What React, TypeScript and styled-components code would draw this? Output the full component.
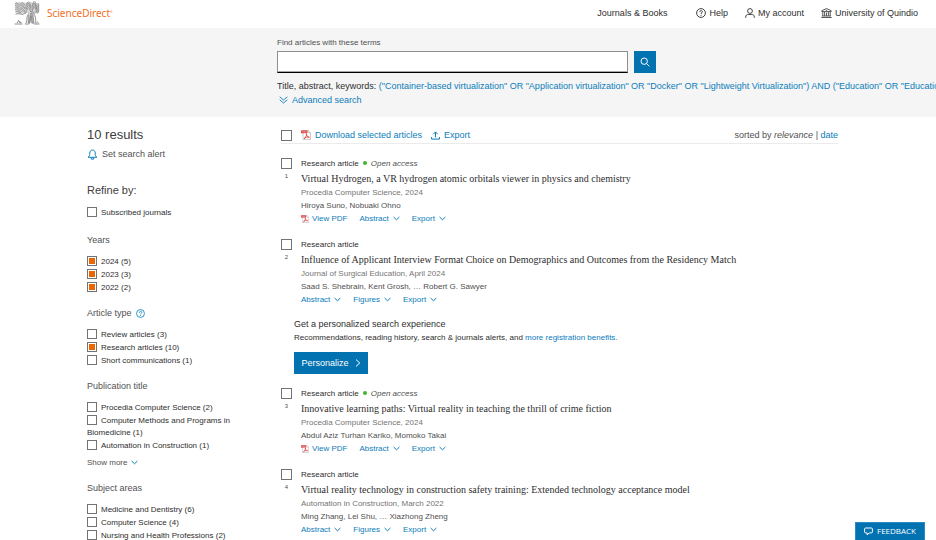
import React from "react";
import styled, { createGlobalStyle, css } from "styled-components";

const blue = "#0c7dbb";
const solidBlue = "#0272b1";
const ink = "#2e2e2e";
const grey = "#505050";

const GlobalStyle = createGlobalStyle`
  * { box-sizing: border-box; }
  html, body, #root { height: 100%; }
  body {
    margin: 0;
    overflow: hidden;
    background: #fff;
    color: ${ink};
    font: 8px/13px "Liberation Sans", Arial, sans-serif;
  }
  h1, h2, h3, p, ul, ol { margin: 0; padding: 0; font-weight: 400; }
  ul, ol { list-style: none; }
  button, input { font: inherit; }
  svg { flex: none; display: block; }
`;

const Page = styled.div`
  height: 100%;
  overflow: hidden;
`;

const Header = styled.header`
  display: flex;
  align-items: center;
  height: 28px;
  padding: 0 18px 2px 14px;
`;

const Brand = styled.a`
  display: flex;
  align-items: center;
  gap: 7px;
  color: #f36d21;
  text-decoration: none;
  font: 10px/14px "Noto Sans", sans-serif;
`;

const TradeMark = styled.sup`
  font-size: 3px;
  line-height: 0;
`;

const Nav = styled.nav`
  display: flex;
  align-items: center;
  margin-left: auto;
  font-size: 9px;
`;

const NavLink = styled.a<{ $gap: number }>`
  display: flex;
  align-items: center;
  gap: 3px;
  margin-left: ${(p) => p.$gap}px;
  color: ${ink};
  text-decoration: none;
  white-space: nowrap;
`;

const SearchArea = styled.section`
  padding: 8px 0 10px 277px;
  background: #f5f5f5;
`;

const SearchLabel = styled.label`
  display: block;
  line-height: 13px;
  color: ${grey};
`;

const SearchRow = styled.div`
  display: flex;
  gap: 6px;
  max-width: 379px;
  margin-top: 2px;
`;

const SearchInput = styled.input`
  flex: 1;
  min-width: 0;
  height: 22px;
  padding: 0 6px;
  border: 1px solid #8e8e8e;
  border-bottom: 1px solid #000;
  border-radius: 0;
  outline: 0;
  background: #fff;
  box-shadow: inset 0 -1px 0 #aaa;
`;

const SearchButton = styled.button`
  display: grid;
  place-items: center;
  width: 22px;
  height: 22px;
  padding: 0;
  border: 0;
  background: ${solidBlue};
  color: #fff;
`;

const Query = styled.p`
  margin-top: 6px;
  overflow: hidden;
  font-size: 9px;
  line-height: 14px;
  white-space: nowrap;
`;

const AdvancedRow = styled.div`
  display: flex;
  padding-left: 2px;
`;

const Link = styled.a`
  color: ${blue};
  text-decoration: none;
`;

const IconLink = styled(Link)<{ $large?: boolean }>`
  display: inline-flex;
  align-items: center;
  gap: 4px;
  white-space: nowrap;
  ${(p) => p.$large && css`font-size: 9px; line-height: 14px;`}
`;

const Content = styled.div`
  display: grid;
  grid-template-columns: 152px minmax(0, 1fr);
  gap: 42px;
  padding: 10px 98px 0 87px;
`;

const ResultCount = styled.h1`
  color: #3c3c3c;
  font-size: 13px;
  line-height: 15px;
`;

const AlertButton = styled.button`
  display: flex;
  align-items: center;
  gap: 4px;
  margin-top: 5px;
  padding: 0;
  border: 0;
  background: none;
  color: ${grey};
  font-size: 9px;
  line-height: 14px;
`;

const RefineTitle = styled.h2`
  margin: 21px 0 9px;
  color: #3c3c3c;
  font-size: 11px;
  line-height: 16px;
`;

const AccessFilter = styled.div`
  padding-bottom: 2px;
`;

const FilterGroup = styled.section`
  margin-top: 13px;
`;

const FilterTitle = styled.h3`
  display: flex;
  align-items: center;
  gap: 4px;
  margin-bottom: 9px;
  color: ${grey};
  font-size: 9px;
  line-height: 13px;
`;

const FilterList = styled.ul`
  display: grid;
  gap: 1px;
  line-height: 12px;
`;

const FilterLabel = styled.label`
  display: block;
  color: ${ink};
`;

const Checkbox = styled.input.attrs({ type: "checkbox" })`
  appearance: none;
  flex: none;
  width: 11px;
  height: 11px;
  margin: 0;
  border: 1px solid #737373;
  border-radius: 0;
  background: #fff;
  &:checked {
    background: #eb6500;
    box-shadow: inset 0 0 0 1px #fff;
  }
`;

const FilterCheckbox = styled(Checkbox)`
  width: 10px;
  height: 10px;
  margin-right: 4px;
  vertical-align: -2px;
`;

const ShowMore = styled.button`
  display: flex;
  align-items: center;
  gap: 4px;
  margin-top: 4px;
  padding: 0;
  border: 0;
  background: none;
  color: ${grey};
  line-height: 13px;
`;

const Toolbar = styled.div`
  display: flex;
  align-items: center;
  gap: 9px;
  height: 17px;
  border-bottom: 1px solid #ebebeb;
  font-size: 9px;
`;

const Sorting = styled.span`
  margin-left: auto;
  color: ${grey};
  white-space: nowrap;
`;

const Results = styled.ol`
  margin-top: 12px;
`;

const Article = styled.li`
  display: grid;
  grid-template-columns: 11px minmax(0, 1fr);
  column-gap: 9px;
  margin-bottom: 12px;
`;

const Marker = styled.div`
  display: flex;
  flex-direction: column;
  align-items: center;
  gap: 1px;
  padding-top: 2px;
  color: ${grey};
  font-size: 6px;
`;

const TypeLine = styled.div`
  display: flex;
  align-items: center;
  gap: 4px;
  height: 14px;
`;

const OpenDot = styled.span`
  width: 4px;
  height: 4px;
  border-radius: 50%;
  background: #3cb62c;
`;

const Access = styled.em`
  color: ${grey};
`;

const ArticleTitle = styled.h2`
  font: 10px/17px "Liberation Serif", "Times New Roman", serif;
`;

const TitleLink = styled.a`
  color: ${ink};
  text-decoration: none;
`;

const Journal = styled.div`
  color: #757575;
  line-height: 12px;
`;

const Authors = styled.div`
  color: ${grey};
  line-height: 13px;
`;

const Actions = styled.div`
  display: flex;
  gap: 12px;
  height: 13px;
`;

const ActionButton = styled.button`
  display: flex;
  align-items: center;
  gap: 4px;
  padding: 0;
  border: 0;
  background: none;
  color: ${blue};
  line-height: 13px;
`;

const PdfLink = styled(IconLink)`
  gap: 3px;
`;

const Promo = styled.li`
  margin: 0 0 12px 13px;
`;

const PromoTitle = styled.h2`
  font-size: 9px;
  line-height: 13px;
`;

const PersonalizeButton = styled.button`
  display: flex;
  align-items: center;
  justify-content: center;
  gap: 6px;
  width: 74px;
  height: 22px;
  margin-top: 8px;
  padding: 0;
  border: 0;
  background: ${solidBlue};
  color: #fff;
  font-size: 9px;
`;

const Feedback = styled.button`
  position: fixed;
  right: 11px;
  bottom: 0;
  display: flex;
  align-items: center;
  justify-content: center;
  gap: 4px;
  width: 70px;
  height: 18px;
  padding: 0 0 1px;
  border: 1px solid #2a8bc4;
  border-bottom: 0;
  background: ${solidBlue};
  color: #fff;
  font: 8px/14px "Open Sans", "Noto Sans", sans-serif;
`;

const stroke = { fill: "none", stroke: "currentColor", strokeWidth: 1 } as const;

const Chevron = () => (
  <svg width="7" height="5" viewBox="0 0 7 5" {...stroke}>
    <path d="M.6 1 3.5 3.8 6.4 1" />
  </svg>
);

const HelpIcon = ({ size = 10 }: { size?: number }) => (
  <svg width={size} height={size} viewBox="0 0 10 10" {...stroke} strokeWidth={0.9}>
    <circle cx="5" cy="5" r="4.4" />
    <path d="M3.7 4.1c0-2 2.7-1.9 2.7-.3 0 1-1.4 1-1.4 2.2" />
    <path d="M5 6.8v1" />
  </svg>
);

const UserIcon = () => (
  <svg width="10" height="10" viewBox="0 0 10 10" {...stroke} strokeWidth={0.9}>
    <circle cx="5" cy="3" r="2.4" />
    <path d="M.7 9.8V8.9c0-1.5 1.1-2.4 2.5-2.4h3.6c1.4 0 2.5.9 2.5 2.4v.9" />
  </svg>
);

const InstitutionIcon = () => (
  <svg width="11" height="10" viewBox="0 0 11 10" {...stroke} strokeWidth={0.8}>
    <path d="M.8 3.6V2.7L5.5.6l4.7 2.1v.9z" />
    <path d="M1.8 3.8v4.1M3.6 3.8v4.1M5.5 4.6v3.3M7.4 3.8v4.1M9.2 3.8v4.1M1 8h9M.3 9.5h10.4" />
    <circle cx="5.5" cy="2.3" r=".3" />
  </svg>
);

const SearchIcon = () => (
  <svg width="10" height="10" viewBox="0 0 10 10" {...stroke}>
    <circle cx="4.2" cy="4.2" r="3.2" />
    <path d="m6.5 6.5 2.8 2.8" />
  </svg>
);

const DoubleChevron = () => (
  <svg width="9" height="8" viewBox="0 0 9 8" {...stroke} strokeWidth={0.9}>
    <path d="M.7.8 4.5 4 8.3.8M.7 3.8 4.5 7l3.8-3.2" />
  </svg>
);

const ExportIcon = () => (
  <svg width="9" height="9" viewBox="0 0 9 9" {...stroke}>
    <path d="M4.5 6.4V1.2M2.3 3.2l2.2-2.3 2.2 2.3M.6 6v2.1h7.8V6" />
  </svg>
);

const BellIcon = () => (
  <svg width="11" height="11" viewBox="0 0 11 11" {...stroke} stroke={blue}>
    <path d="M1.1 8.3h8.8C8.5 7.6 8.2 6 8.2 4c0-4-5.400-4-5.400 0 0 2-.3 3.600-1.700 4.300zM4.300 8.600v1.500h2.400V8.600" />
  </svg>
);

const PdfIcon = ({ size = 10 }: { size?: number }) => (
  <svg width={size} height={size} viewBox="0 0 10 10">
    <path d="M2 .5h5.2l2.3 2.2v6.8H2z" fill="#fff" stroke="#aaa" strokeWidth=".6" />
    <path d="M7 .5v2.3h2.4" fill="none" stroke="#aaa" strokeWidth=".6" />
    <path d="M0 .4h6.4v2.8H0z" fill="#dc3535" />
    <path d="M1 2.6V1.2h.8v.7H1M2.8 1.2v1.4c1.3 0 1.3-1.4 0-1.4M4.6 2.6V1.2h1M4.6 1.9h.8" fill="none" stroke="#fff" strokeWidth=".3" />
    <path d="M3 8.6c2-1.2 2.7-3.4 2.4-4.8.2 2.4 1.6 3.4 3 3.4-1.9-.5-4 .1-5.4 1.4" fill="none" stroke="#dc3535" strokeWidth=".8" />
  </svg>
);

const ArrowRight = () => (
  <svg width="6" height="8" viewBox="0 0 6 8" {...stroke}>
    <path d="m1 .6 3.8 3.4L1 7.4" />
  </svg>
);

const SpeechIcon = () => (
  <svg width="9" height="9" viewBox="0 0 9 9" {...stroke}>
    <path d="M1.6 1h5.8q1 0 1 1v2.900q0 1-1 1H5.200L3.200 8V5.900H1.600q-1 0-1-1V2q0-1 1-1z" />
  </svg>
);

const TreeLogo = () => (
  <svg width="26" height="24" viewBox="0 0 26 24" fill="none" stroke="#777" strokeWidth=".6">
    <path
      d="M1 1.8Q4 .5 8 1.2T14 1.2t6 .2 5 .6L25.4 9l-1 3.5-5 .6-2-1.8-5 .8-4 1.4-6-.2-1-1.2z"
      fill="#d8d8d8"
      stroke="none"
    />
    <path d="M1 3q1.5-2 3 0t3-.5 3 .5 3-.6 3 .8 3-.8 3 .8 3-.5M.8 5q1.5-2 3 0t3-.5 3 .8 3-.9 3 .5 3-.5 3 .8 3-.5M1.2 7q1.5-2 3 0t3-.5 3 .5 3-.9 3 .8 3-.5 3 .5 2.5-.5M1 9q1.5-2 3 0t3-.5 3 .5 3-.6 3 .8 3-.8 3 .8 3-.5M1.5 11q1.5-2 3 0t3-.5 3 .5 2-.6M16 11q1.5-1 3 .4t3-.8 2.5.6M1.5 13.4q3-1.500 5-.3t5-.9" />
    <path d="M2 1.7 4 4M6 1.8l1.5 3M10 1.8 8.6 4.5M12 2l2 2.5M17 1.8l-1 2.8M20 2l1.6 2.5M24 2l-1 3.5M3 6l1.5 2.5M8 6.4 6.5 9M12 6l1 3M17 6l-1.5 3M21 6.5 22.5 9M5 9.5l2 3M20 10l-1 2.5" stroke="#999" strokeWidth=".4" />
    <path d="M15 11.5c0 1.5-1.8 2.5-2 5s0 4-1.2 5.8M19.5 12.5c2.2 2.500 2.300 6 2.300 9.800M15 13.500c-1 2.500-.8 5-.6 8.500" strokeWidth=".8" />
    <path d="M16.5 12.2q1.6-.8 2.5 1.3l1 8.7h-2.2l-.8-7-1 7h-1.4z" fill="#aaa" stroke="#666" strokeWidth=".5" />
    <path d="M.6 23h7.9M11 23h4M20 23h5.4M3 22.2l1.6-2.8 1.9 2.8M5 20.8l2.5.8M22.4 22.2l1.2-1.2 1.2 1.2" strokeWidth=".8" />
  </svg>
);

type Filter = { label: string; checked?: boolean };

const Filters = ({ items }: { items: Filter[] }) => (
  <FilterList>
    {items.map((item) => (
      <li key={item.label}>
        <FilterLabel>
          <FilterCheckbox defaultChecked={item.checked} />
          {item.label}
        </FilterLabel>
      </li>
    ))}
  </FilterList>
);

type Entry = {
  title: string;
  journal: string;
  authors: string;
  open?: boolean;
};

const entries: Entry[] = [
  {
    title: "Virtual Hydrogen, a VR hydrogen atomic orbitals viewer in physics and chemistry",
    journal: "Procedia Computer Science, 2024",
    authors: "Hiroya Suno, Nobuaki Ohno",
    open: true,
  },
  {
    title: "Influence of Applicant Interview Format Choice on Demographics and Outcomes from the Residency Match",
    journal: "Journal of Surgical Education, April 2024",
    authors: "Saad S. Shebrain, Kent Grosh, … Robert G. Sawyer",
  },
  {
    title: "Innovative learning paths: Virtual reality in teaching the thrill of crime fiction",
    journal: "Procedia Computer Science, 2024",
    authors: "Abdul Aziz Turhan Kariko, Momoko Takai",
    open: true,
  },
  {
    title: "Virtual reality technology in construction safety training: Extended technology acceptance model",
    journal: "Automation in Construction, March 2022",
    authors: "Ming Zhang, Lei Shu, … Xiazhong Zheng",
  },
];

const Result = ({ entry, index }: { entry: Entry; index: number }) => (
  <Article>
    <Marker>
      <Checkbox aria-label={`Select article ${index}`} />
      {index}
    </Marker>
    <div>
      <TypeLine>
        Research article
        {entry.open && (
          <>
            <OpenDot />
            <Access>Open access</Access>
          </>
        )}
      </TypeLine>
      <ArticleTitle>
        <TitleLink href="#article">{entry.title}</TitleLink>
      </ArticleTitle>
      <Journal>{entry.journal}</Journal>
      <Authors>{entry.authors}</Authors>
      <Actions>
        {entry.open && (
          <PdfLink href="#pdf">
            <PdfIcon size={8} />
            View PDF
          </PdfLink>
        )}
        <ActionButton>Abstract <Chevron /></ActionButton>
        {!entry.open && <ActionButton>Figures <Chevron /></ActionButton>}
        <ActionButton>Export <Chevron /></ActionButton>
      </Actions>
    </div>
  </Article>
);

export default function App() {
  return (
    <Page>
      <GlobalStyle />
      <Header>
        <Brand href="#home">
          <TreeLogo />
          <span>ScienceDirect<TradeMark>®</TradeMark></span>
        </Brand>
        <Nav>
          <NavLink href="#journals" $gap={0}>Journals &amp; Books</NavLink>
          <NavLink href="#help" $gap={29}><HelpIcon />Help</NavLink>
          <NavLink href="#account" $gap={17}><UserIcon />My account</NavLink>
          <NavLink href="#institution" $gap={17}><InstitutionIcon />University of Quindio</NavLink>
        </Nav>
      </Header>
      <SearchArea>
        <SearchLabel htmlFor="terms">Find articles with these terms</SearchLabel>
        <SearchRow>
          <SearchInput id="terms" type="text" />
          <SearchButton aria-label="Search"><SearchIcon /></SearchButton>
        </SearchRow>
        <Query>
          Title, abstract, keywords:{" "}
          <Link href="#query">
            ("Container-based virtualization" OR "Application virtualization" OR "Docker" OR "Lightweight Virtualization") AND ("Education" OR "Education S
          </Link>
        </Query>
        <AdvancedRow>
          <IconLink href="#advanced" $large><DoubleChevron />Advanced search</IconLink>
        </AdvancedRow>
      </SearchArea>
      <Content>
        <aside>
          <ResultCount>10 results</ResultCount>
          <AlertButton><BellIcon />Set search alert</AlertButton>
          <RefineTitle>Refine by:</RefineTitle>
          <AccessFilter>
            <Filters items={[{ label: "Subscribed journals" }]} />
          </AccessFilter>
          <FilterGroup>
            <FilterTitle>Years</FilterTitle>
            <Filters
              items={[
                { label: "2024 (5)", checked: true },
                { label: "2023 (3)", checked: true },
                { label: "2022 (2)", checked: true },
              ]}
            />
          </FilterGroup>
          <FilterGroup>
            <FilterTitle>Article type <Link href="#types" aria-label="About article types"><HelpIcon size={9} /></Link></FilterTitle>
            <Filters
              items={[
                { label: "Review articles (3)" },
                { label: "Research articles (10)", checked: true },
                { label: "Short communications (1)" },
              ]}
            />
          </FilterGroup>
          <FilterGroup>
            <FilterTitle>Publication title</FilterTitle>
            <Filters
              items={[
                { label: "Procedia Computer Science (2)" },
                { label: "Computer Methods and Programs in Biomedicine (1)" },
                { label: "Automation in Construction (1)" },
              ]}
            />
            <ShowMore>Show more <Link as="span"><Chevron /></Link></ShowMore>
          </FilterGroup>
          <FilterGroup>
            <FilterTitle>Subject areas</FilterTitle>
            <Filters
              items={[
                { label: "Medicine and Dentistry (6)" },
                { label: "Computer Science (4)" },
                { label: "Nursing and Health Professions (2)" },
              ]}
            />
          </FilterGroup>
        </aside>
        <main>
          <Toolbar>
            <Checkbox aria-label="Select all articles" />
            <IconLink href="#download"><PdfIcon />Download selected articles</IconLink>
            <IconLink href="#export"><ExportIcon />Export</IconLink>
            <Sorting>sorted by <em>relevance</em> | <Link href="#date">date</Link></Sorting>
          </Toolbar>
          <Results>
            <Result entry={entries[0]} index={1} />
            <Result entry={entries[1]} index={2} />
            <Promo>
              <PromoTitle>Get a personalized search experience</PromoTitle>
              <p>
                Recommendations, reading history, search &amp; journals alerts, and{" "}
                <Link href="#benefits">more registration benefits.</Link>
              </p>
              <PersonalizeButton>Personalize <ArrowRight /></PersonalizeButton>
            </Promo>
            <Result entry={entries[2]} index={3} />
            <Result entry={entries[3]} index={4} />
          </Results>
        </main>
      </Content>
      <Feedback><SpeechIcon />FEEDBACK</Feedback>
    </Page>
  );
}
